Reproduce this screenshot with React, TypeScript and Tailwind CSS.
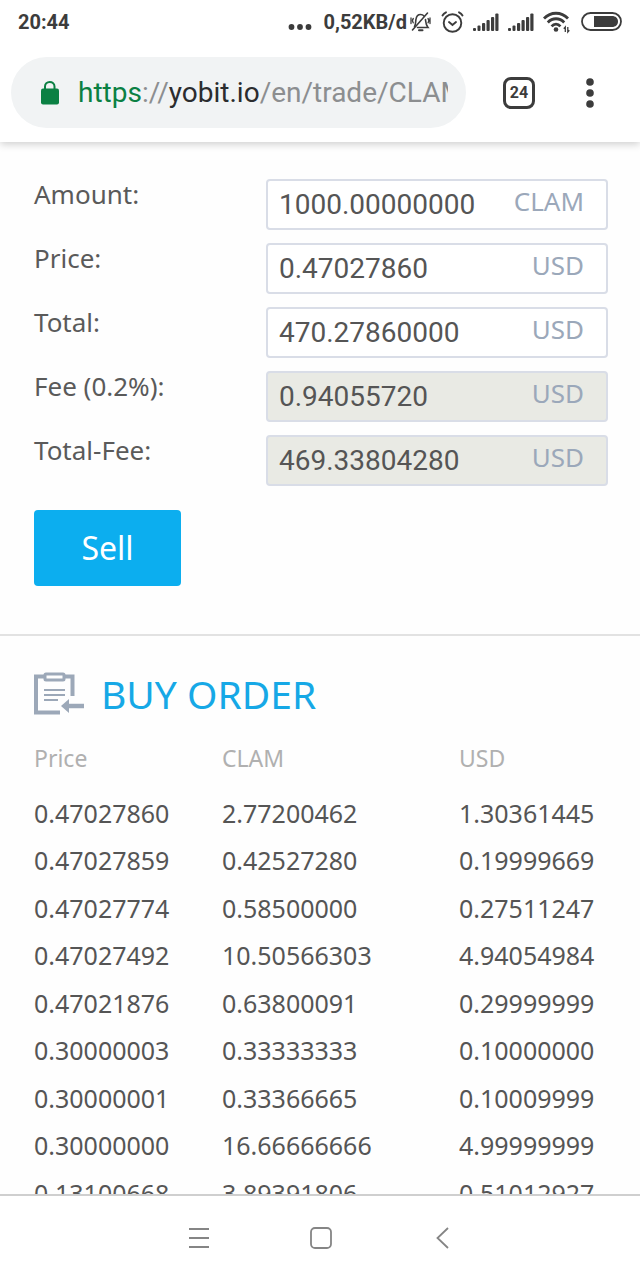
const fields = [
  { id: "amount", label: "Amount:", value: "1000.00000000", unit: "CLAM", readOnly: false },
  { id: "price", label: "Price:", value: "0.47027860", unit: "USD", readOnly: false },
  { id: "total", label: "Total:", value: "470.27860000", unit: "USD", readOnly: false },
  { id: "fee", label: "Fee (0.2%):", value: "0.94055720", unit: "USD", readOnly: true },
  { id: "total-fee", label: "Total-Fee:", value: "469.33804280", unit: "USD", readOnly: true },
];

const orders = [
  ["0.47027860", "2.77200462", "1.30361445"],
  ["0.47027859", "0.42527280", "0.19999669"],
  ["0.47027774", "0.58500000", "0.27511247"],
  ["0.47027492", "10.50566303", "4.94054984"],
  ["0.47021876", "0.63800091", "0.29999999"],
  ["0.30000003", "0.33333333", "0.10000000"],
  ["0.30000001", "0.33366665", "0.10009999"],
  ["0.30000000", "16.66666666", "4.99999999"],
  ["0.13100668", "3.89391806", "0.51012927"],
];

function SignalIcon() {
  return (
    <svg width="26" height="20" viewBox="0 0 26 20" fill="currentColor" aria-hidden="true">
      <rect x="0" y="16" width="3" height="3" rx="1" />
      <rect x="4.5" y="13.5" width="3" height="5.5" rx="1" />
      <rect x="9" y="11" width="3.2" height="8" rx="1" />
      <rect x="13.5" y="8" width="3.2" height="11" rx="1" />
      <rect x="18" y="5" width="3.2" height="14" rx="1" />
      <rect x="22.3" y="1.5" width="3.2" height="17.5" rx="1" />
    </svg>
  );
}

function StatusBar() {
  return (
    <div className="flex h-11 items-center justify-between px-[18px] text-xl font-bold text-[#3c3c3c]">
      <span>20:44</span>
      <div className="flex items-center gap-[9px]">
        <div className="flex items-center gap-[3px]">
          {/* More notifications */}
          <svg className="mr-2" width="24" height="20" viewBox="0 0 24 20" fill="currentColor" aria-hidden="true">
            <circle cx="3.5" cy="15" r="2.9" />
            <circle cx="12" cy="15" r="2.9" />
            <circle cx="20.5" cy="15" r="2.9" />
          </svg>
          <span>0,52KB/d</span>
          {/* Muted bell */}
          <svg width="21" height="22" viewBox="0 0 21 22" fill="none" stroke="currentColor" strokeWidth="1.6" strokeLinecap="round" aria-hidden="true">
            <path d="M4.5 15.5C6 13.5 5.5 10 6 8C6.5 5 8.5 3.5 10.5 3.5C12 3.5 13.2 4 14 5" />
            <path d="M15.5 8.5C15.8 11.5 15.6 13.5 18 16.5H7.5" />
            <path d="M9 19.2H12.5" strokeWidth="2" />
            <path d="M2.500 19L17.5 2" />
            <path d="M3.3 7.5C2.3 8.8 2.3 10.5 3.3 11.8M1 7V12.5M18 7.5C19 8.8 19 10.5 18 11.8M20 7V12.5" strokeWidth="1.3" />
          </svg>
        </div>
        {/* Alarm clock */}
        <svg width="24" height="24" viewBox="0 0 24 24" fill="none" stroke="currentColor" strokeWidth="1.9" strokeLinecap="round" aria-hidden="true">
          <circle cx="12.5" cy="13" r="8.8" />
          <path d="M9 12L12.5 15L16 12" />
          <path d="M2.5 5.5C3.3 4 4.5 3 6 2.3M22.5 5.5C21.7 4 20.5 3 19 2.3" />
        </svg>
        <SignalIcon />
        <SignalIcon />
        {/* Wi-Fi with traffic arrows */}
        <svg width="29" height="24" viewBox="0 0 29 24" fill="none" stroke="currentColor" strokeWidth="2.8" aria-hidden="true">
          <path d="M1 8.5C7.8 1.5 18.2 1.5 25 8.5" />
          <path d="M4.8 12.5C9.5 7.5 16.5 7.5 21.2 12.5" />
          <path d="M8.6 16.3C11 13.5 15 13.5 17.4 16.3" />
          <circle cx="13" cy="19.5" r="2.3" fill="currentColor" stroke="none" />
          <path d="M22.3 22V17L20.8 18.7M24.8 17V22L26.3 20.3" strokeWidth="1.3" />
        </svg>
        {/* Battery */}
        <svg width="41" height="22" viewBox="0 0 41 22" fill="none" aria-hidden="true">
          <rect x="1" y="2" width="39" height="17" rx="8.5" stroke="currentColor" strokeWidth="1.8" />
          <path d="M13 5H31C34.5 5 37 7.2 37 10.5C37 13.8 34.5 16 31 16H13Z" fill="currentColor" />
        </svg>
      </div>
    </div>
  );
}

function AddressBar() {
  return (
    <div className="flex items-center pb-3.5 pl-[11px] pr-[41px] pt-[13px]">
      <button
        type="button"
        aria-label="Address"
        className="flex h-[71px] min-w-0 flex-1 items-center rounded-full bg-[#f1f3f4] pl-[29px] pr-[18px] text-left text-[28px]"
      >
        <svg className="mr-[18px] shrink-0" width="20" height="26" viewBox="0 0 20 26" aria-hidden="true">
          <path d="M5 10V6.5C5 3.800 7 2 9.700 2C12.400 2 14.500 3.800 14.500 6.500V10" fill="none" stroke="#0b8043" strokeWidth="2" />
          <rect x="1" y="8.5" width="18" height="16" rx="2" fill="#0b8043" />
        </svg>
        <span className="min-w-0 flex-1 overflow-hidden whitespace-nowrap text-[#8c8e90]">
          <span className="text-[#0b8043]">https</span>://<span className="text-[#2b2c2e]">yobit.io</span>/en/trade/CLAM
        </span>
      </button>
      <button
        type="button"
        aria-label="Open tabs"
        className="ml-[37px] flex size-8 items-center justify-center rounded-lg border-3 border-[#3c3c3c] text-base font-bold text-[#3c3c3c]"
      >
        24
      </button>
      <button type="button" aria-label="Browser menu" className="ml-[46px] text-[#3c3c3c]">
        <svg width="18" height="32" viewBox="0 0 18 32" fill="currentColor" aria-hidden="true">
          <circle cx="9" cy="5" r="3.8" />
          <circle cx="9" cy="16" r="3.8" />
          <circle cx="9" cy="27" r="3.8" />
        </svg>
      </button>
    </div>
  );
}

function SellForm() {
  return (
    <form className="border-b-2 border-[#e2e2e2] pb-12 pl-[34px] pr-8 pt-[37px]">
      <div className="space-y-[13px]">
        {fields.map((field) => (
          <div key={field.id} className="flex items-start">
            <label htmlFor={field.id} className="w-[232px] shrink-0 text-[26px] leading-[30px] text-[#5a5a5a]">
              {field.label}
            </label>
            <div className="relative min-w-0 flex-1">
              <input
                id={field.id}
                type="text"
                defaultValue={field.value}
                readOnly={field.readOnly}
                className="block h-[51px] w-full rounded border-2 border-[#d9dde7] bg-white pl-[11px] pr-24 font-['Roboto',sans-serif] text-[28px] text-[#555555] read-only:bg-[#e9eae4]"
              />
              <span className="absolute right-6 top-0 text-[26px] leading-[44px] text-[#9ba8ba]">{field.unit}</span>
            </div>
          </div>
        ))}
      </div>
      <button type="button" className="mt-6 h-[76px] w-[147px] rounded bg-[#0caeef] text-[32px] text-white">
        Sell
      </button>
    </form>
  );
}

function BuyOrders() {
  return (
    <section className="pl-[34px] pr-8 pt-[30px]">
      <h2 className="flex items-center gap-[17px] text-[39px] leading-[56px] text-[#16a8e6]">
        {/* Clipboard with incoming arrow */}
        <svg width="50" height="44" viewBox="0 0 50 44" fill="none" stroke="#9ca8b8" aria-hidden="true">
          <path d="M26 40.5H2V4.5H10M31 4.5H38.5V24" strokeWidth="4" />
          <rect x="11" y="2" width="19" height="6" rx="1" strokeWidth="3" />
          <path d="M10 18H31M10 23H31M10 28H24" strokeWidth="2.2" />
          <path d="M34 34H50" strokeWidth="4.5" />
          <path d="M27 34L35 27V41Z" fill="#9ca8b8" stroke="none" />
        </svg>
        BUY ORDER
      </h2>
      <table className="mt-4 w-full table-fixed text-left text-[25px] text-[#555555]">
        <thead>
          <tr className="h-[52px] align-top text-[23px] leading-8 text-[#b0b0b0]">
            <th scope="col" className="w-[188px] pt-1 font-normal">Price</th>
            <th scope="col" className="w-[237px] pt-1 font-normal">CLAM</th>
            <th scope="col" className="pt-1 font-normal">USD</th>
          </tr>
        </thead>
        <tbody>
          {orders.map(([price, clam, usd]) => (
            <tr key={price} className="h-[47px] even:h-12">
              <td>{price}</td>
              <td>{clam}</td>
              <td>{usd}</td>
            </tr>
          ))}
        </tbody>
      </table>
    </section>
  );
}

function NavigationBar() {
  return (
    <nav className="flex h-[86px] shrink-0 items-center justify-center gap-24 border-t-2 border-[#cfcfcf] bg-white pl-0.5 text-[#858585]">
      <button type="button" aria-label="Recent apps">
        <svg width="26" height="26" viewBox="0 0 26 26" fill="none" stroke="currentColor" strokeWidth="1.8">
          <path d="M3 4H23M3 13H23M3 22H23" />
        </svg>
      </button>
      <button type="button" aria-label="Home">
        <svg width="26" height="26" viewBox="0 0 26 26" fill="none" stroke="currentColor" strokeWidth="1.8">
          <rect x="3" y="3" width="20" height="20" rx="4" />
        </svg>
      </button>
      <button type="button" aria-label="Back">
        <svg width="26" height="26" viewBox="0 0 26 26" fill="none" stroke="currentColor" strokeWidth="1.8">
          <path d="M18 3L7.5 13L18 23" />
        </svg>
      </button>
    </nav>
  );
}

export default function App() {
  return (
    <div className="flex h-screen flex-col bg-white font-['Roboto',sans-serif]">
      <header className="z-10 shrink-0 bg-white shadow-[0_2px_8px_rgba(0,0,0,0.2)]">
        <StatusBar />
        <AddressBar />
      </header>
      <main className="min-h-0 flex-1 overflow-hidden bg-[#fefefe] font-['Noto_Sans',sans-serif]">
        <SellForm />
        <BuyOrders />
      </main>
      <NavigationBar />
    </div>
  );
}
